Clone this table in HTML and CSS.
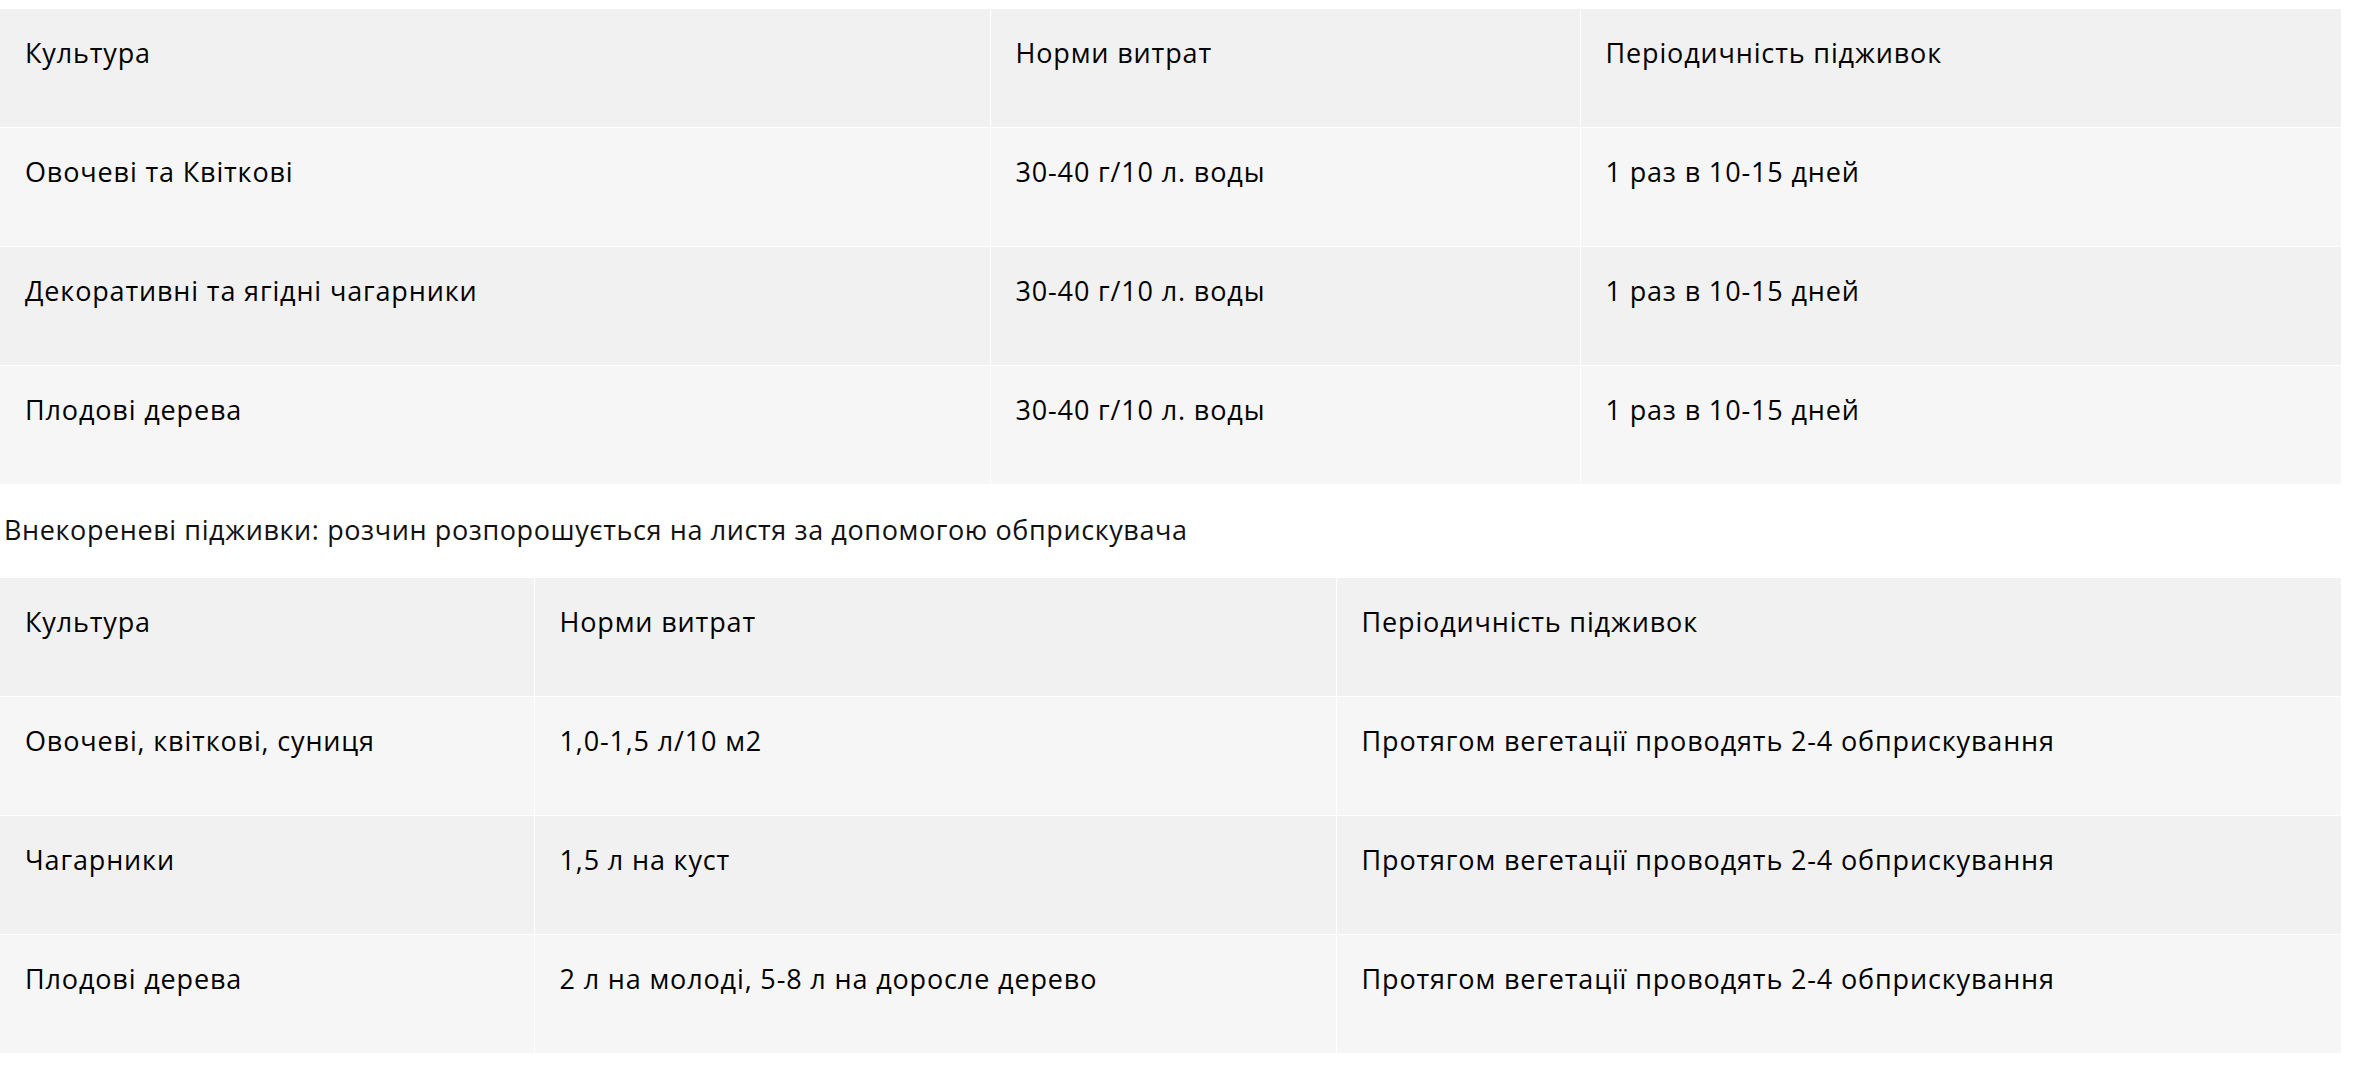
FILE: index.html
```html
<!DOCTYPE html>
<html lang="uk">
<head>
<meta charset="utf-8">
<title>Підживки</title>
<link rel="stylesheet" href="styles.css">
</head>
<body>
<main class="content">
  <table class="rates rates-root">
    <colgroup>
      <col class="c1-a"><col class="c2-a"><col class="c3-a">
    </colgroup>
    <tr class="odd"><td>Культура</td><td>Норми витрат</td><td>Періодичність підживок</td></tr>
    <tr class="even"><td>Овочеві та Квіткові</td><td>30-40 г/10 л. воды</td><td>1 раз в 10-15 дней</td></tr>
    <tr class="odd"><td>Декоративні та ягідні чагарники</td><td>30-40 г/10 л. воды</td><td>1 раз в 10-15 дней</td></tr>
    <tr class="even"><td>Плодові дерева</td><td>30-40 г/10 л. воды</td><td>1 раз в 10-15 дней</td></tr>
  </table>
  <p class="note">Внекореневі підживки: розчин розпорошується на листя за допомогою обприскувача</p>
  <table class="rates rates-leaf">
    <colgroup>
      <col class="c1-b"><col class="c2-b"><col class="c3-b">
    </colgroup>
    <tr class="odd"><td>Культура</td><td>Норми витрат</td><td>Періодичність підживок</td></tr>
    <tr class="even"><td>Овочеві, квіткові, суниця</td><td>1,0-1,5 л/10 м2</td><td>Протягом вегетації проводять 2-4 обприскування</td></tr>
    <tr class="odd"><td>Чагарники</td><td>1,5 л на куст</td><td>Протягом вегетації проводять 2-4 обприскування</td></tr>
    <tr class="even"><td>Плодові дерева</td><td>2 л на молоді, 5-8 л на доросле дерево</td><td>Протягом вегетації проводять 2-4 обприскування</td></tr>
  </table>
</main>
</body>
</html>
```
FILE: styles.css
```css
html, body {
  margin: 0;
  padding: 0;
  background: #ffffff;
}

body {
  font-family: "Open Sans", "Liberation Sans", sans-serif;
  color: #000000;
}

.content {
  padding-top: 9px;
  width: 2341px;
}

.rates {
  width: 2341px;
  border-collapse: collapse;
  table-layout: fixed;
}

.rates td {
  padding: 24px 25px 54px 25px;
  height: 40px;
  line-height: 40px;
  font-size: 27px;
  font-weight: 500;
  letter-spacing: 0.85px;
  vertical-align: top;
  text-align: left;
  white-space: nowrap;
}

.rates td + td {
  border-left: 1px solid #ffffff;
}

.rates tr + tr td {
  border-top: 1px solid #ffffff;
}

.rates .odd td {
  background: #f1f1f1;
}

.rates .even td {
  background: #f6f6f6;
}

.c1-a { width: 990px; }
.c2-a { width: 590px; }
.c3-a { width: 761px; }

.c1-b { width: 534px; }
.c2-b { width: 802px; }
.c3-b { width: 1005px; }

.note {
  margin: 26px 0 28px 4px;
  font-size: 27px;
  line-height: 40px;
  font-weight: 400;
  letter-spacing: 0.6px;
  color: #111111;
}
```
